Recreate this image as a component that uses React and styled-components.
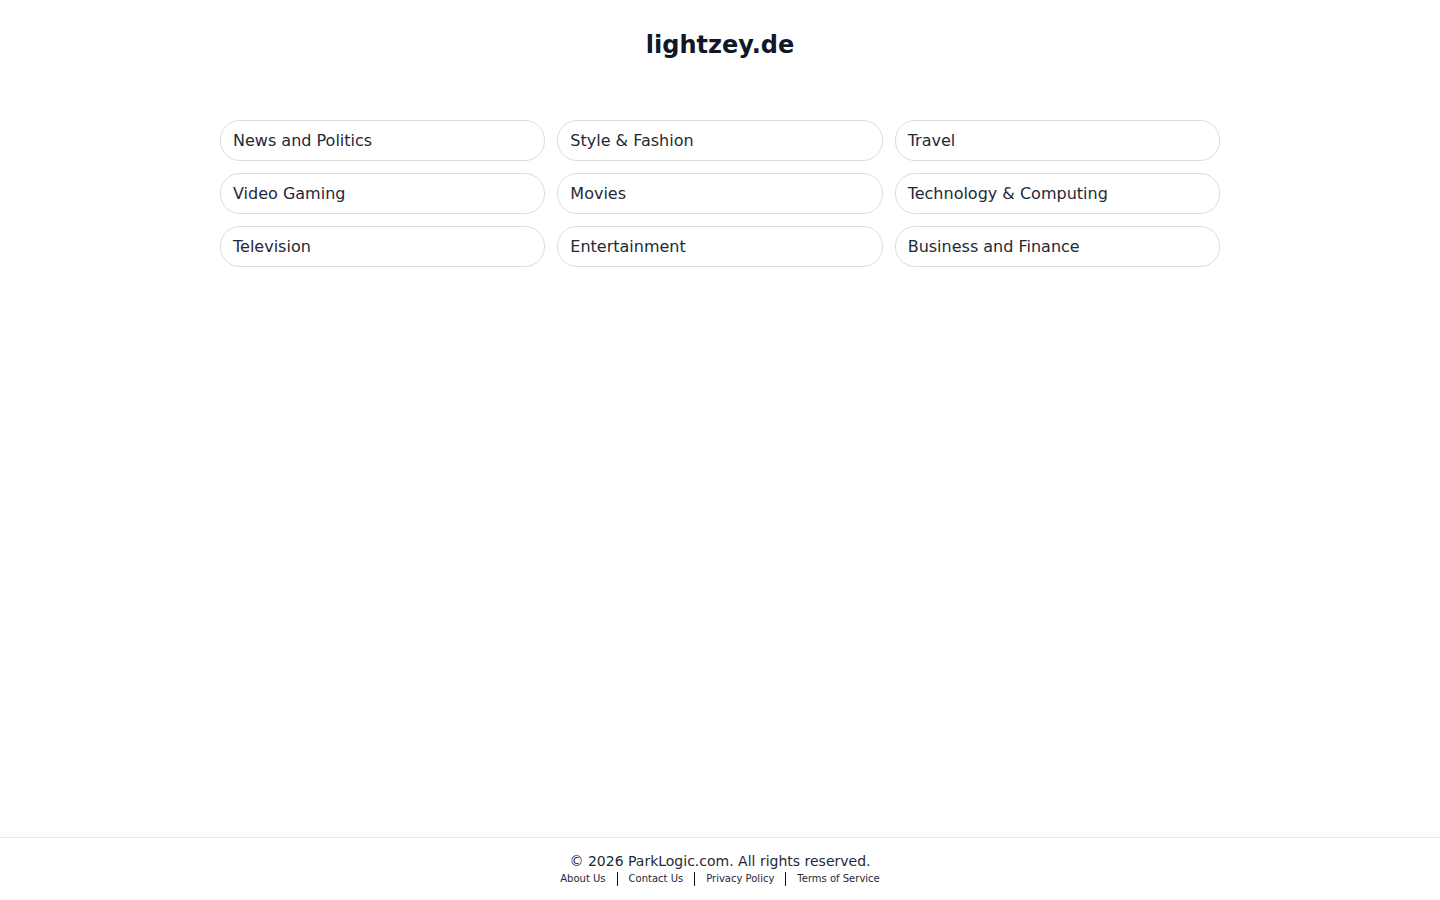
import React from 'react';
import styled, { createGlobalStyle } from 'styled-components';

const GlobalStyle = createGlobalStyle`
  html, body {
    margin: 0;
    padding: 0;
    background: #ffffff;
    font-family: "DejaVu Sans", "Liberation Sans", sans-serif;
    color: #111827;
  }
`;

const Page = styled.div`
  min-height: 100vh;
  display: flex;
  flex-direction: column;
`;

const Main = styled.main`
  flex: 1;
  display: flex;
  flex-direction: column;
  align-items: center;
`;

const Title = styled.h1`
  margin: 29px 0 0;
  font-size: 24px;
  line-height: 32px;
  font-weight: 700;
  color: #111827;
`;

const Grid = styled.div`
  margin-top: 59px;
  width: 1000px;
  display: grid;
  grid-template-columns: repeat(3, 1fr);
  gap: 12px;
`;

const Topic = styled.a`
  display: flex;
  align-items: center;
  height: 41px;
  box-sizing: border-box;
  padding: 0 12px;
  border: 1px solid #dcdcdf;
  border-radius: 20px;
  font-size: 16px;
  color: #1f2937;
  text-decoration: none;
  cursor: pointer;
`;

const Footer = styled.footer`
  border-top: 1px solid #e5e7eb;
  padding: 13px 0 14px;
  display: flex;
  flex-direction: column;
  align-items: center;
`;

const Copy = styled.div`
  font-size: 14px;
  line-height: 20px;
  color: #1f2937;
`;

const Links = styled.nav`
  display: flex;
  align-items: center;
  margin-top: 1px;
`;

const FooterLink = styled.a`
  font-size: 10px;
  line-height: 14px;
  color: #1f2937;
  text-decoration: none;
  padding: 0 11px;
  border-left: ${p => (p.first ? 'none' : '1px solid #111827')};
`;

const topics = [
  'News and Politics',
  'Style & Fashion',
  'Travel',
  'Video Gaming',
  'Movies',
  'Technology & Computing',
  'Television',
  'Entertainment',
  'Business and Finance',
];

const links = ['About Us', 'Contact Us', 'Privacy Policy', 'Terms of Service'];

export default function App() {
  return (
    <Page>
      <GlobalStyle />
      <Main>
        <Title>lightzey.de</Title>
        <Grid>
          {topics.map(t => (
            <Topic key={t}>{t}</Topic>
          ))}
        </Grid>
      </Main>
      <Footer>
        <Copy>© 2026 ParkLogic.com. All rights reserved.</Copy>
        <Links>
          {links.map((l, i) => (
            <FooterLink key={l} first={i === 0}>{l}</FooterLink>
          ))}
        </Links>
      </Footer>
    </Page>
  );
}
